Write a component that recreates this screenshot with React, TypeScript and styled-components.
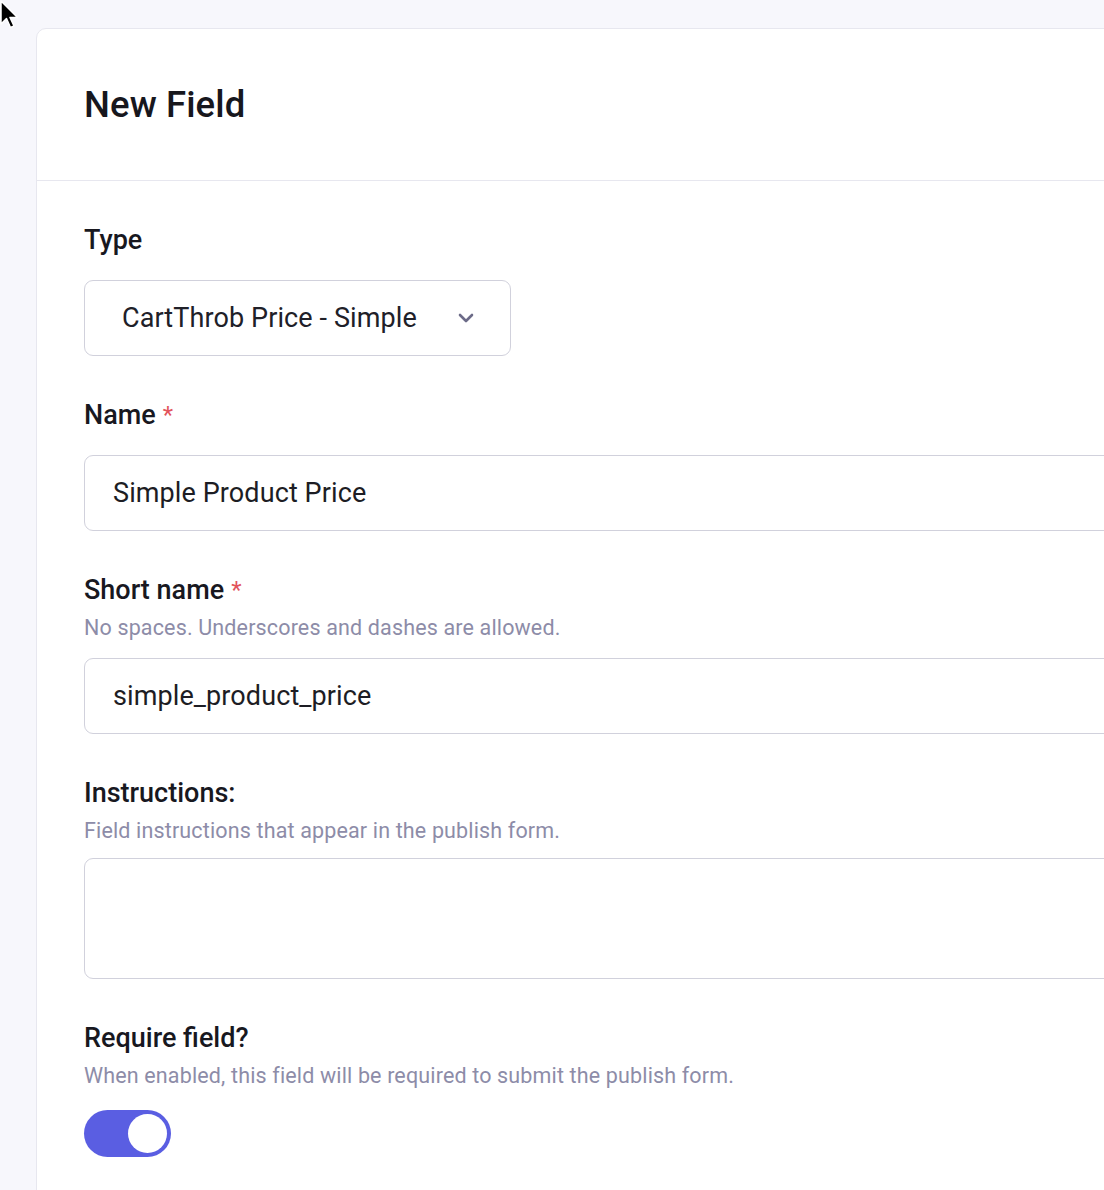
import React from "react";
import styled, { createGlobalStyle } from "styled-components";

const GlobalStyle = createGlobalStyle`
  html, body {
    margin: 0;
    padding: 0;
    background: #f7f7fc;
    overflow: hidden;
  }
  body {
    font-family: Roboto, "Liberation Sans", sans-serif;
    color: #1b1b22;
  }
`;

const Page = styled.div`
  position: relative;
  width: 1104px;
  height: 1190px;
  padding: 28px 0 0 36px;
  box-sizing: border-box;
  overflow: hidden;
`;

const Card = styled.div`
  width: 1200px;
  min-height: 1300px;
  background: #fff;
  border: 1.5px solid #e7e7ef;
  border-radius: 10px 0 0 0;
`;

const CardHeader = styled.div`
  height: 151px;
  display: flex;
  align-items: center;
  padding: 0 47px;
  border-bottom: 1.5px solid #e7e7ef;
`;

const Title = styled.h1`
  margin: 0;
  font-size: 36.5px;
  font-weight: 500;
  color: #17171d;
  letter-spacing: 0.1px;
`;

const CardBody = styled.div`
  display: flex;
  flex-direction: column;
  gap: 41px;
  padding: 41px 47px 0;
`;

const Field = styled.div`
  display: flex;
  flex-direction: column;
  align-items: flex-start;
`;

const Label = styled.div`
  font-size: 27px;
  line-height: 36px;
  font-weight: 500;
  color: #18181f;
  display: flex;
  align-items: center;
  gap: 7px;
`;

const Required = styled.span`
  color: #e2535b;
  font-size: 24px;
  font-weight: 400;
`;

const Help = styled.div`
  margin-top: 6px;
  font-size: 21.5px;
  letter-spacing: 0.15px;
  line-height: 28px;
  color: #8d8ca8;
`;

const Control = styled.div<{ $gap?: number }>`
  margin-top: ${(p) => p.$gap ?? 22}px;
  align-self: stretch;
`;

const SelectBox = styled.div`
  width: 427px;
  height: 76px;
  box-sizing: border-box;
  border: 1.5px solid #d1d1dc;
  border-radius: 9px;
  display: flex;
  align-items: center;
  justify-content: space-between;
  padding: 0 35px 0 37px;
  font-size: 27px;
  letter-spacing: 0.1px;
  color: #202028;
`;

const TextInput = styled.div<{ $tall?: boolean }>`
  height: ${(p) => (p.$tall ? "121px" : "76px")};
  box-sizing: border-box;
  border: 1.5px solid #d1d1dc;
  border-radius: 9px;
  padding: 0 28px;
  display: flex;
  align-items: center;
  font-size: 27px;
  letter-spacing: 0.1px;
  color: #1d1d24;
`;

const Toggle = styled.div<{ $on?: boolean }>`
  width: 87px;
  height: 47px;
  border-radius: 24px;
  background: ${(p) => (p.$on ? "#5a5ee2" : "#d3d3dd")};
  display: flex;
  align-items: center;
  justify-content: ${(p) => (p.$on ? "flex-end" : "flex-start")};
  padding: 0 4px;
  box-sizing: border-box;
`;

const Knob = styled.div`
  width: 39px;
  height: 39px;
  border-radius: 50%;
  background: #fff;
`;

const Cursor = styled.svg`
  position: absolute;
  left: 0;
  top: 0;
`;

const Chevron = () => (
  <svg width="18" height="12" viewBox="0 0 18 12" fill="none">
    <path d="M3 3 L9 9 L15 3" stroke="#6c6b88" strokeWidth="2.6" strokeLinecap="round" strokeLinejoin="round" />
  </svg>
);

export default function App() {
  return (
    <Page>
      <GlobalStyle />
      <Card>
        <CardHeader>
          <Title>New Field</Title>
        </CardHeader>
        <CardBody>
          <Field>
            <Label>Type</Label>
            <Control>
              <SelectBox>
                <span>CartThrob Price - Simple</span>
                <Chevron />
              </SelectBox>
            </Control>
          </Field>
          <Field>
            <Label>
              Name<Required>*</Required>
            </Label>
            <Control>
              <TextInput>Simple Product Price</TextInput>
            </Control>
          </Field>
          <Field>
            <Label>
              Short name<Required>*</Required>
            </Label>
            <Help>No spaces. Underscores and dashes are allowed.</Help>
            <Control $gap={16}>
              <TextInput>simple_product_price</TextInput>
            </Control>
          </Field>
          <Field>
            <Label>Instructions:</Label>
            <Help>Field instructions that appear in the publish form.</Help>
            <Control $gap={13}>
              <TextInput $tall />
            </Control>
          </Field>
          <Field>
            <Label>Require field?</Label>
            <Help>When enabled, this field will be required to submit the publish form.</Help>
            <Control $gap={20}>
              <Toggle $on>
                <Knob />
              </Toggle>
            </Control>
          </Field>
        </CardBody>
      </Card>
      <Cursor width="22" height="32" viewBox="0 0 22 32">
        <path d="M1 1 L1 24 L6.5 18.5 L10.5 27.5 L14 26 L10 17.5 L17.5 17.5 Z" fill="#000" stroke="#fff" strokeWidth="1.5" strokeLinejoin="round" />
      </Cursor>
    </Page>
  );
}
